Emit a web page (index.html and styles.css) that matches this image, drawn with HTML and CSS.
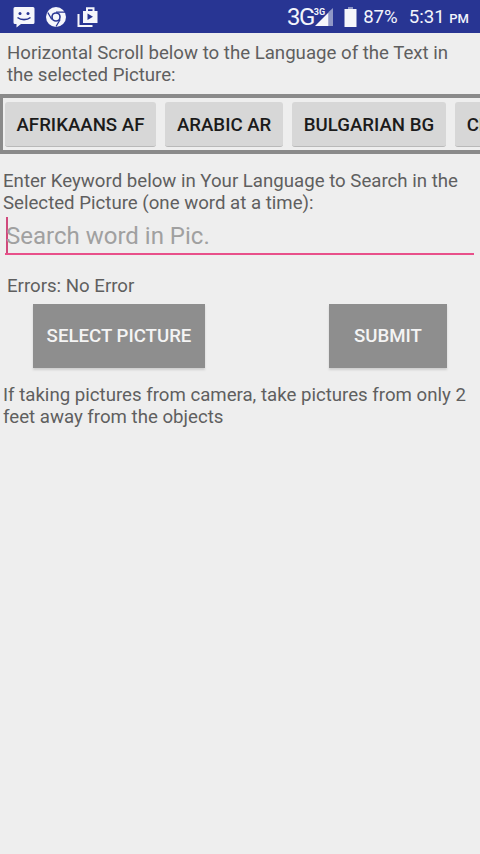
FILE: index.html
```html
<!DOCTYPE html>
<html lang="en">
<head>
<meta charset="utf-8">
<title>Search word in picture</title>
<link rel="stylesheet" href="styles.css">
</head>
<body>
<header class="status">
  <div class="status-icons">
    <svg class="ic" width="22" height="22" viewBox="0 0 22 22"><path class="w" d="M2 1h18a1.500 1.500 0 0 1 1.500 1.500v14a1.500 1.500 0 0 1-1.500 1.500H8l-4.500 3.500V18H2a1.500 1.500 0 0 1-1.500-1.500v-14A1.500 1.500 0 0 1 2 1z"/><circle class="b" cx="7" cy="7.500" r="1.500"/><circle class="b" cx="15" cy="7.500" r="1.500"/><path class="bs" d="M4.500 11.500c3.500 2.800 9.500 2.800 13 0"/></svg>
    <svg class="ic" width="20" height="20" viewBox="0 0 20 20"><circle class="w" cx="10" cy="10" r="10"/><circle class="b" cx="10" cy="10" r="4.800"/><circle class="w" cx="10" cy="10" r="3.200"/><path class="bs thin" d="M10 5.200h9M5.800 12.500 1.800 5.500M14.200 12.500 10 19.500"/></svg>
    <svg class="ic" width="21" height="20" viewBox="0 0 21 20"><path class="w" d="M6 4h14.500v12H6z"/><path class="wl" d="M10 4V1.200h6.500V4"/><path class="wl" d="M1.500 7v12h14"/><path class="b" d="M10.500 6.500v6.500l5.500-3.200z"/></svg>
  </div>
  <div class="status-right">
    <span class="net">3G</span><sup class="net-sup">3G</sup>
    <svg class="signal" width="18" height="18" viewBox="0 0 18 18"><path class="dim" d="M18 0v18h-4.500V4z"/><path class="w" d="M13.500 4.500V18H0z"/></svg>
    <svg class="battery" width="13" height="20" viewBox="0 0 13 20"><path class="dim" d="M4 0h5v2H4z"/><path class="w" d="M0.500 2h12v18H0.500z"/></svg>
    <span class="pct">87%</span>
    <span class="time">5:31 <small>PM</small></span>
  </div>
</header>
<main>
  <p class="intro">Horizontal Scroll below to the Language of the Text in the selected Picture:</p>
  <div class="scroller">
    <button class="lang">AFRIKAANS AF</button>
    <button class="lang">ARABIC AR</button>
    <button class="lang">BULGARIAN BG</button>
    <button class="lang">CHINESE</button>
  </div>
  <p class="keyword">Enter Keyword below in Your Language to Search in the Selected Picture (one word at a time):</p>
  <div class="field"><span class="caret"></span><span class="placeholder">Search word in Pic.</span></div>
  <p class="errors">Errors: No Error</p>
  <div class="actions">
    <button class="action select">SELECT PICTURE</button>
    <button class="action submit">SUBMIT</button>
  </div>
  <p class="hint">If taking pictures from camera, take pictures from only 2 feet away from the objects</p>
</main>
</body>
</html>
```

FILE: styles.css
```css
* { box-sizing: border-box; }
html, body { margin: 0; padding: 0; }
body { width: 480px; height: 854px; overflow: hidden; background: #eeeeee; font-family: Roboto, "Liberation Sans", sans-serif; color: #5f5f5f; }
.status { height: 33px; background: #283593; display: flex; justify-content: space-between; align-items: center; padding: 0 11px 0 13px; color: #f2f4fb; }
.status-icons { display: flex; align-items: center; gap: 11px; }
.ic { display: block; }
.w { fill: #f5f6fb; }
.b { fill: #283593; }
.bs { fill: none; stroke: #283593; stroke-width: 1.6; }
.thin { stroke-width: 1.3; }
.wl { fill: none; stroke: #f5f6fb; stroke-width: 2; }
.dim { fill: #8f97c6; }
.status-right { display: flex; align-items: center; }
.net { font-size: 24px; letter-spacing: -1.500px; }
.net-sup { font-size: 9px; font-weight: 700; align-self: flex-start; margin: 4px 0 0 0; }
.signal { margin-left: -10px; }
.battery { margin-left: 11px; }
.pct { font-size: 18.650px; margin-left: 6px; }
.time { font-size: 18.650px; margin-left: 11px; }
.time small { font-size: 13px; font-weight: 500; }
p { margin: 0; font-size: 18.650px; line-height: 22px; }
.intro { padding: 9px 7px 0; height: 61px; }
.scroller { height: 60px; display: flex; gap: 9.500px; padding: 4px 0 3px 2px; border: 4px solid #8a8a8a; border-left-width: 3px; border-right-width: 0; overflow: hidden; }
.lang { flex: none; height: 45px; padding: 1px 11.500px 0; border: 0; border-bottom: 1px solid #b9b9b9; border-radius: 3px; background: #d7d7d7; color: #1b1b1b; font: 500 18.650px Roboto, sans-serif; }
.keyword { padding: 16px 3px 0; height: 63px; }
.field { position: relative; margin: 0 6px 0 5px; height: 38px; border-bottom: 2px solid #e8508a; }
.caret { position: absolute; left: 1px; top: 0; width: 2px; height: 36px; background: #d0497c; }
.placeholder { position: absolute; left: 1px; top: 3px; font-size: 24px; line-height: 32px; color: #a0a0a0; }
.errors { padding: 20px 7px 0; height: 49px; }
.actions { display: flex; padding-left: 33px; }
.action { height: 64px; border: 0; background: #8e8e8e; color: #f4f4f4; font: 500 18.650px Roboto, sans-serif; box-shadow: 0 2px 2px #cfcfcf; }
.select { width: 172px; }
.submit { width: 118px; margin-left: 124px; }
.hint { padding: 16px 3px 0; }
```
